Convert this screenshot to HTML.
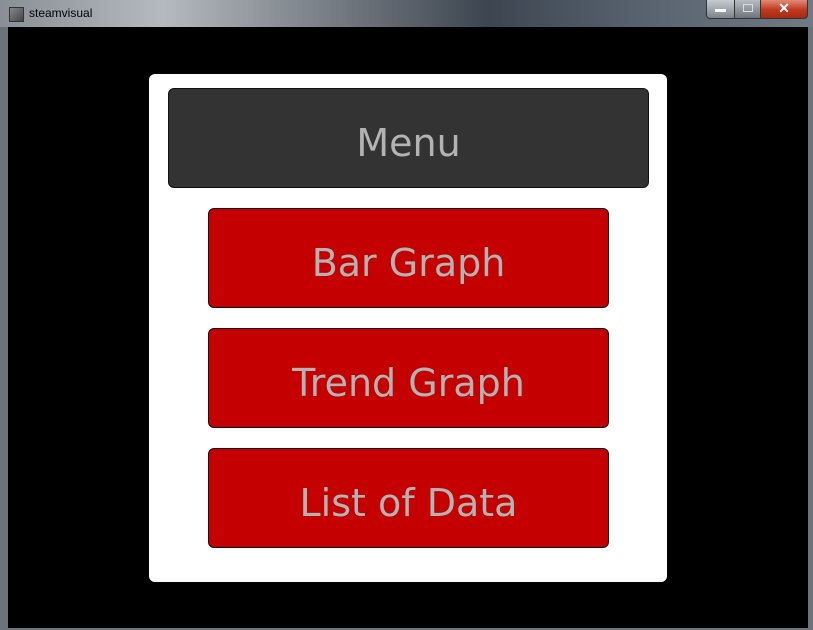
<!DOCTYPE html>
<html><head><style>
body{margin:0;width:813px;height:630px;overflow:hidden;background:#5a5f66;position:relative;font-family:"DejaVu Sans","Liberation Sans",sans-serif}
.tb{position:absolute;left:0;top:0;width:813px;height:27px;background:linear-gradient(90deg,#8a8f95 0%,#b5bac0 20%,#6a7078 45%,#3c4550 60%,#5a6470 80%,#707a84 100%)}
.ic{position:absolute;left:9px;top:7px;width:13px;height:13px;background:linear-gradient(135deg,#888,#444);border:1px solid #333}
.tt{position:absolute;left:29px;top:6px;font:12px "Liberation Sans",sans-serif;color:#000}
.ctl{position:absolute;top:0;height:18px;border:1px solid #333;border-top:none}
.fr{position:absolute;left:0;top:27px;width:813px;height:603px;background:#6d737a}
.bk{position:absolute;left:8px;top:27px;width:800px;height:601px;background:#000}
.pn{position:absolute;left:149px;top:74px;width:518px;height:508px;background:#fff;border-radius:6px}
.bt{position:absolute;box-sizing:border-box;border:1px solid #111;border-radius:6px;color:#b3b3b3;font-size:38px;text-align:center}
</style></head><body>
<div class="tb"></div>
<div class="ic"></div><div class="tt">steamvisual</div>
<div class="ctl" style="left:706px;width:28px;background:linear-gradient(#c8ccd2,#7d848c);border-radius:0 0 0 4px"><div style="position:absolute;left:8px;top:9px;width:11px;height:3px;background:#fff"></div></div>
<div class="ctl" style="left:734px;width:26px;background:linear-gradient(#b8bcc2,#6d747c)"><div style="position:absolute;left:8px;top:4px;width:8px;height:6px;border:1px solid #ddd"></div></div>
<div class="ctl" style="left:760px;width:46px;background:linear-gradient(#e08a78,#c0391f 55%,#a52a15);border-radius:0 0 4px 0;color:#fff;font:bold 14px 'Liberation Sans',sans-serif;text-align:center;line-height:17px">✕</div>
<div class="fr"></div>
<div class="bk"></div>
<div class="pn"></div>
<div class="bt" style="left:168px;top:88px;width:481px;height:100px;background:#333;line-height:108px">Menu</div>
<div class="bt" style="left:208px;top:208px;width:401px;height:100px;background:#c40000;line-height:108px">Bar Graph</div>
<div class="bt" style="left:208px;top:328px;width:401px;height:100px;background:#c40000;line-height:108px">Trend Graph</div>
<div class="bt" style="left:208px;top:448px;width:401px;height:100px;background:#c40000;line-height:108px">List of Data</div>
</body></html>
